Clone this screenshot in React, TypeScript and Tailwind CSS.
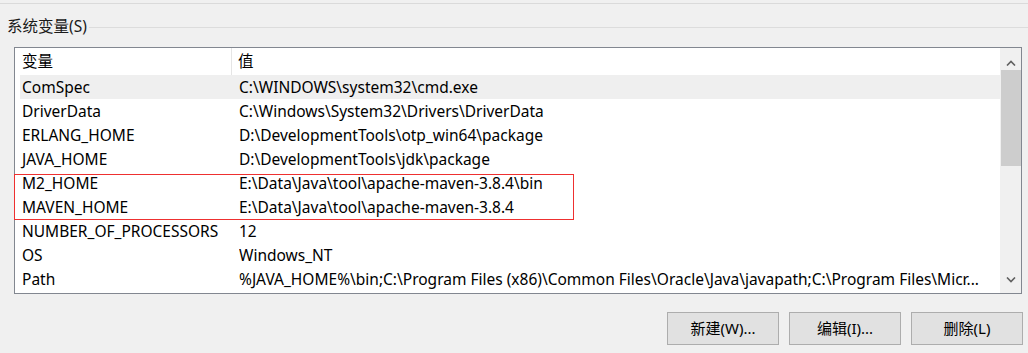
import React from "react";

const rows: [string, string][] = [
  ["ComSpec", "C:\\WINDOWS\\system32\\cmd.exe"],
  ["DriverData", "C:\\Windows\\System32\\Drivers\\DriverData"],
  ["ERLANG_HOME", "D:\\DevelopmentTools\\otp_win64\\package"],
  ["JAVA_HOME", "D:\\DevelopmentTools\\jdk\\package"],
  ["M2_HOME", "E:\\Data\\Java\\tool\\apache-maven-3.8.4\\bin"],
  ["MAVEN_HOME", "E:\\Data\\Java\\tool\\apache-maven-3.8.4"],
  ["NUMBER_OF_PROCESSORS", "12"],
  ["OS", "Windows_NT"],
  [
    "Path",
    "%JAVA_HOME%\\bin;C:\\Program Files (x86)\\Common Files\\Oracle\\Java\\javapath;C:\\Program Files\\Micr...",
  ],
];

const font = {
  fontFamily: '"Noto Sans", "Noto Sans CJK SC", sans-serif',
};

export default function App() {
  return (
    <div
      className="w-[1028px] h-[353px] bg-[#f0f0f0] text-black overflow-hidden flex flex-col"
      style={font}
    >
      <div className="mt-[3px] h-px bg-[#dadada]" />
      <div className="mt-[14px] flex items-center h-[16px]">
        <span className="pl-[7px] pr-[2px] text-[15.5px] leading-[16px] text-[#1a1a1a]">
          系统变量(S)
        </span>
        <div className="flex-1 h-px bg-[#dcdcdc] mt-[2px]" />
      </div>
      <div className="mt-[13px] ml-[14px] w-[1008px] h-[247px] border border-[#828790] bg-white relative flex">
        <div className="w-[985px] flex flex-col">
          <div className="h-[27px] flex items-stretch text-[15.5px] bg-white">
            <div className="w-[217px] pl-[7px] flex items-center border-r border-[#e5e5e5]">
              变量
            </div>
            <div className="flex-1 pl-[6px] flex items-center">值</div>
          </div>
          {rows.map(([k, v], i) => (
            <div key={k} className="h-[24px] pl-[5px] flex">
              <div
                className={`flex-1 flex items-center pt-[1px] text-[15.5px] whitespace-nowrap overflow-hidden ${
                  i === 0 ? "bg-[#efefef]" : ""
                }`}
              >
                <div className="w-[219px] pl-[2px]">{k}</div>
                <div className="flex-1 overflow-hidden">{v}</div>
              </div>
            </div>
          ))}
        </div>
        <div className="w-[21px] bg-[#f0f0f0] flex flex-col items-stretch">
          <div className="h-[22px] flex items-end justify-center pb-[4px]">
            <svg width="10" height="6" viewBox="0 0 10 6">
              <path d="M1 5.5 L5 1.5 L9 5.5" stroke="#606060" strokeWidth="1.6" fill="none" />
            </svg>
          </div>
          <div className="ml-[1px] h-[96px] bg-[#cdcdcd]" />
          <div className="flex-1" />
          <div className="h-[22px] flex items-start justify-center pt-[6px]">
            <svg width="10" height="6" viewBox="0 0 10 6">
              <path d="M1 0.5 L5 4.5 L9 0.5" stroke="#606060" strokeWidth="1.6" fill="none" />
            </svg>
          </div>
        </div>
        <div className="absolute left-[-1px] top-[126px] w-[560px] h-[46px] border border-[#ee3030] pointer-events-none" />
      </div>
      <div className="mt-[18px] flex justify-end gap-[10px] pr-[5px]">
        {["新建(W)...", "编辑(I)...", "删除(L)"].map((t) => (
          <button
            key={t}
            className="w-[112px] h-[33px] bg-[#e1e1e1] border border-[#adadad] text-[15px] flex items-center justify-center"
          >
            {t}
          </button>
        ))}
      </div>
    </div>
  );
}
